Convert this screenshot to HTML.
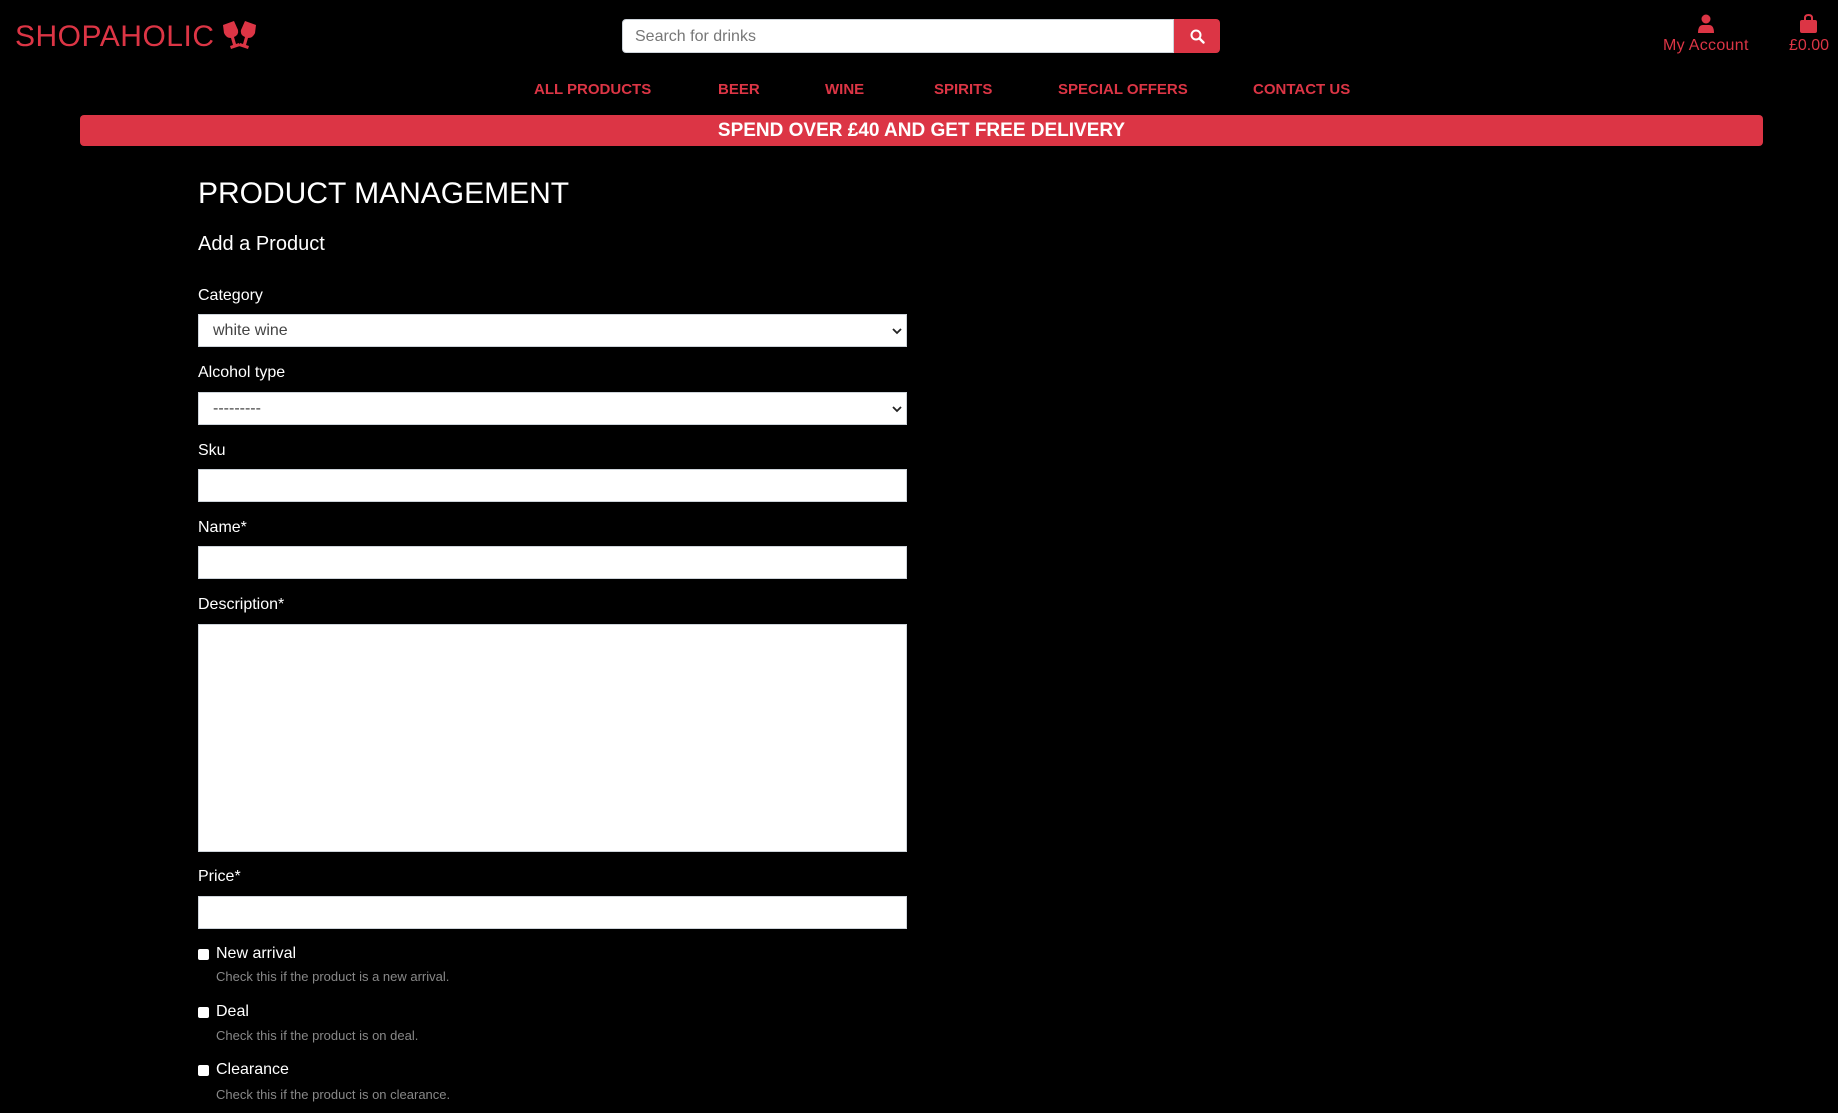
<!DOCTYPE html>
<html><head><meta charset="utf-8"><style>
*{box-sizing:border-box;margin:0;padding:0}
body{width:1838px;height:1113px;background:#000;color:#fff;font-family:"Liberation Sans",sans-serif;position:relative;overflow:hidden}
.a{position:absolute;white-space:nowrap}
.red{color:#dc3545}
.nav{font-weight:bold;font-size:15px;color:#dc3545;top:81px}
.lab{font-size:16px;left:198px}
.in{position:absolute;left:198px;width:709px;background:#fff;border:1px solid #ced4da;height:33px}
.sel{color:#444;font-size:16px;padding:7px 14px}
.sel svg{position:absolute;right:4px;top:12px}
.cb{position:absolute;left:198px;width:11px;height:11px;background:#fff;border-radius:2px}
.help{font-size:13px;color:#888;left:216px}
.cl{font-size:16px;left:216px}
</style></head><body>
<div class="a red" style="left:15px;top:20px;font-size:30px;letter-spacing:0.5px">SHOPAHOLIC</div>
<svg class="a" style="left:221px;top:20px" width="37" height="30" viewBox="0 0 37 30"><g fill="#dc3545"><path d="M2 5 L13 1 L17 10 Q18 15 13 17 L15 24 L18 23 L19 26 L10 29 L9 26 L12 25 L10 18 Q5 18 3 13 Z"/><path d="M35 5 L24 1 L20 10 Q19 15 24 17 L22 24 L19 23 L18 26 L27 29 L28 26 L25 25 L27 18 Q32 18 34 13 Z"/></g></svg>
<div class="a" style="left:622px;top:19px;width:552px;height:34px;background:#fff;border-radius:4px 0 0 4px;border:1px solid #ced4da;color:#777;font-size:16px;padding:8px 12px">Search for drinks</div>
<div class="a" style="left:1174px;top:19px;width:46px;height:34px;background:#dc3545;border-radius:0 4px 4px 0"><svg style="position:absolute;left:16px;top:10px" width="15" height="15" viewBox="0 0 15 15"><circle cx="6" cy="6" r="4.5" fill="none" stroke="#fff" stroke-width="2"/><path d="M9.5 9.5 L13.5 13.5" stroke="#fff" stroke-width="2.4" stroke-linecap="round"/></svg></div>
<svg class="a" style="left:1698px;top:14px" width="16" height="19" viewBox="0 0 16 19"><circle cx="8" cy="5" r="4.5" fill="#dc3545"/><path d="M0 19 Q0 11 5 11 L11 11 Q16 11 16 19Z" fill="#dc3545"/></svg>
<div class="a red" style="left:1663px;top:37px;font-size:16px;letter-spacing:0.3px">My Account</div>
<svg class="a" style="left:1800px;top:14px" width="17" height="19" viewBox="0 0 17 19"><path d="M5 7 V4 Q5 1 8.5 1 Q12 1 12 4 V7" fill="none" stroke="#dc3545" stroke-width="2"/><rect x="0" y="6" width="17" height="13" rx="2" fill="#dc3545"/></svg>
<div class="a red" style="left:1789px;top:37px;font-size:16px">£0.00</div>
<div class="a nav" style="left:534px">ALL PRODUCTS</div>
<div class="a nav" style="left:718px">BEER</div>
<div class="a nav" style="left:825px">WINE</div>
<div class="a nav" style="left:934px">SPIRITS</div>
<div class="a nav" style="left:1058px">SPECIAL OFFERS</div>
<div class="a nav" style="left:1253px">CONTACT US</div>
<div class="a" style="left:80px;top:115px;width:1683px;height:31px;background:#dc3545;border-radius:4px;text-align:center;font-weight:bold;font-size:19px;line-height:31px">SPEND OVER £40 AND GET FREE DELIVERY</div>
<div class="a" style="left:198px;top:177px;font-size:30px">PRODUCT MANAGEMENT</div>
<div class="a" style="left:198px;top:233px;font-size:20px">Add a Product</div>
<div class="a lab" style="top:287px">Category</div>
<div class="in sel" style="top:314px">white wine<svg width="10" height="8" viewBox="0 0 10 8"><path d="M1 2 L5 6 L9 2" fill="none" stroke="#222" stroke-width="1.8"/></svg></div>
<div class="a lab" style="top:364px">Alcohol type</div>
<div class="in sel" style="top:392px">---------<svg width="10" height="8" viewBox="0 0 10 8"><path d="M1 2 L5 6 L9 2" fill="none" stroke="#222" stroke-width="1.8"/></svg></div>
<div class="a lab" style="top:442px">Sku</div>
<div class="in" style="top:469px"></div>
<div class="a lab" style="top:519px">Name*</div>
<div class="in" style="top:546px"></div>
<div class="a lab" style="top:596px">Description*</div>
<div class="in" style="top:624px;height:228px"></div>
<div class="a lab" style="top:868px">Price*</div>
<div class="in" style="top:896px"></div>
<div class="cb" style="top:949px"></div><div class="a cl" style="top:945px">New arrival</div>
<div class="a help" style="top:969px">Check this if the product is a new arrival.</div>
<div class="cb" style="top:1007px"></div><div class="a cl" style="top:1003px">Deal</div>
<div class="a help" style="top:1028px">Check this if the product is on deal.</div>
<div class="cb" style="top:1065px"></div><div class="a cl" style="top:1061px">Clearance</div>
<div class="a help" style="top:1087px">Check this if the product is on clearance.</div>
</body></html>
